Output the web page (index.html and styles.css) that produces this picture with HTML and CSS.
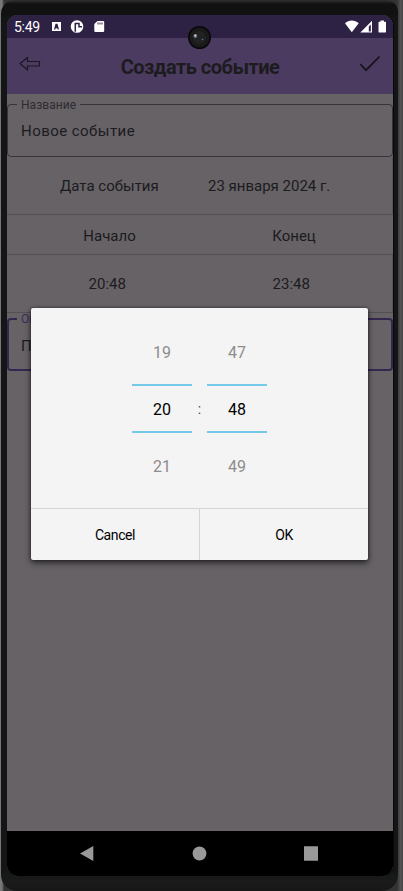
FILE: index.html
```html
<!DOCTYPE html>
<html lang="ru">
<head>
<meta charset="utf-8">
<title>Создать событие</title>
<link rel="stylesheet" href="styles.css">
</head>
<body>
<div class="device">
  <div class="body">
    <div class="screen">
      <div class="statusbar">
        <span class="clock">5:49</span>
        <svg class="notifications" width="54" height="14" viewBox="0 0 54 14">
          <path fill="#fff" fill-rule="evenodd" d="M1 2h9v9H1zM3 9.500h1.300l.4-1.200h1.600l.4 1.200H8L6.500 3.800h-2z"/>
          <circle cx="26" cy="6.500" r="6.300" fill="#fff"/>
          <path fill="none" stroke="#2d2144" stroke-width="1.500" d="M24.300 11.800V3.500H28V6.800H31"/>
          <path fill="#fff" fill-rule="evenodd" d="M46.500 1h6l.7.700v9.600l-.7.700h-8.500l-.7-.7V4zM46.500 2.500v2h1v-2zm2 0v2h1v-2zm2 0v2h1v-2z"/>
        </svg>
        <svg class="signals" width="42" height="14" viewBox="0 0 42 14">
          <path fill="#fff" d="M0 3.300C4-.3 9.500-.3 13.700 3.300L6.800 12.300z"/>
          <path fill="#fff" fill-rule="evenodd" d="M15.300 12.500L27 .8v11.700zM23.800 6.500v5h2V4.500z"/>
          <path fill="#fff" d="M35.500.5h3.500v1.300h1.500l.5.500v9.700l-.5.500h-6.500l-.5-.5V2.300l.5-.5h1.500z"/>
        </svg>
      </div>
      <div class="appbar">
        <svg class="back" width="22" height="16" viewBox="0 0 22 16">
          <path d="M1 7.500L8.500 1.500v4H20.500v4.500H8.500v4z" fill="none" stroke="#1b1624" stroke-width="1.200"/>
        </svg>
        <h1>Создать событие</h1>
        <svg class="done" width="22" height="18" viewBox="0 0 22 18">
          <path d="M1.200 9L7 15.200L20.500 1.500" fill="none" stroke="#15121a" stroke-width="1.700"/>
        </svg>
      </div>
      <fieldset class="field name"><legend>Название</legend><span>Новое событие</span></fieldset>
      <div class="date"><span>Дата события</span><span>23 января 2024 г.</span></div>
      <div class="row heads"><span>Начало</span><span>Конец</span></div>
      <div class="row times"><span>20:48</span><span>23:48</span></div>
      <fieldset class="field about"><legend>Описание</legend><span>П</span></fieldset>
      <div class="navbar">
        <svg width="386" height="45" viewBox="0 0 386 45" fill="#999">
          <path d="M73 22.500L86.300 15v15z"/>
          <circle cx="192.500" cy="22.500" r="6.900"/>
          <path d="M297 15.200h14v14.600h-14z"/>
        </svg>
      </div>
    </div>
  </div>
  <svg class="camera" width="24" height="24" viewBox="0 0 24 24">
    <circle cx="11.500" cy="12.500" r="11.500" fill="#080808"/>
    <circle cx="11.500" cy="12.500" r="10" fill="#1a1a1a"/>
    <circle cx="11.500" cy="12.500" r="6.500" fill="#222223"/>
    <circle cx="7.300" cy="11" r="1.900" fill="#6f7580"/>
    <circle cx="7.300" cy="10.500" r=".9" fill="#d5d5df"/>
    <circle cx="14.500" cy="14.500" r=".8" fill="#3d80bb"/>
  </svg>
  <div class="dialog">
    <div class="pickers">
      <div class="wheel"><span>19</span><b>20</b><span class="next">21</span></div>
      <i>:</i>
      <div class="wheel"><span>47</span><b>48</b><span class="next">49</span></div>
    </div>
    <div class="actions"><button>Cancel</button><button>OK</button></div>
  </div>
</div>
</body>
</html>
```
FILE: styles.css
```css
* { box-sizing: border-box; }
body { margin: 0; font-family: Roboto, sans-serif; background: #414241; }
.device {
  position: relative;
  width: 403px;
  height: 891px;
  overflow: hidden;
  padding-left: 1px;
  background: linear-gradient(90deg, #777 0, #777 2px, #333 4px, #333 397px, #3c3c3c 398px, #565656 401px, #414141 403px);
}
.body {
  width: 397px;
  height: 891px;
  padding: 15px 5px 15px 6px;
  border-radius: 14px 12px 16px 16px;
  background: linear-gradient(#303030 0, #111 4px, #111 14px, #141616 20px, #141616 870px, #1a1a1a 882px, #171717 891px);
}
.screen {
  display: flex;
  flex-direction: column;
  width: 386px;
  height: 861px;
  border-radius: 11px;
  overflow: hidden;
  background: #666266;
  color: #1c1b1e;
  box-shadow: 1px 0 0 #080808;
}
.statusbar {
  display: flex;
  height: 23px;
  flex: none;
  padding: 4px 6px 0 7px;
  background: #2d2144;
  color: #fff;
}
.clock { width: 37px; font-size: 14px; line-height: 16px; letter-spacing: -.3px; }
.notifications { margin-top: 1px; }
.signals { margin: 1px 0 0 auto; }
.appbar {
  display: flex;
  height: 56px;
  flex: none;
  padding: 0 12px;
  background: #4c3b61;
}
.back { margin-top: 18px; }
.done { margin-top: 17px; }
h1 { flex: 1; margin: 1px 0 0; text-align: center; font-size: 20px; line-height: 56px; font-weight: 700; letter-spacing: -.5px; }
.field {
  height: 59px;
  flex: none;
  min-width: 0;
  margin: 4px 0 0;
  padding: 0 0 0 13px;
  border: 1.500px solid #363438;
  border-radius: 4px;
  font-size: 15px;
}
.field legend { height: 13px; padding: 1px 4px 0; margin-left: -4px; font-size: 12px; line-height: 13px; letter-spacing: .05px; color: #2e2c31; }
.field span { display: block; margin-top: 11px; line-height: 18px; letter-spacing: .45px; }
.date {
  display: flex;
  height: 58px;
  flex: none;
  padding-left: 53px;
  border-right: 1px solid #575458;
  border-bottom: 1px solid #525052;
  font-size: 15px;
  line-height: 58px;
}
.date span:first-child { width: 148px; }
.row { display: flex; flex: none; font-size: 15px; border-bottom: 1px solid #525052; }
.row span { flex: 0 0 50%; text-align: center; }
.heads span:first-child { padding-left: 12px; }
.heads span:last-child { padding-right: 5px; }
.heads { height: 40px; line-height: 42px; }
.times { height: 58px; line-height: 59px; border-right: 1px solid #575458; }
.times span:first-child { padding-left: 8px; }
.times span:last-child { padding-right: 9px; }
.about { height: 58px; margin-top: 0; padding-left: 12px; border: 2px solid #352850; }
.about legend { height: 12px; padding-top: 0; color: #3b2d59; }
.about span { margin-top: 12px; }
.navbar { height: 45px; margin-top: auto; background: #000; }
.navbar svg { display: block; }
.camera { position: absolute; left: 188px; top: 25px; }
.dialog {
  position: absolute;
  left: 31px;
  top: 308px;
  width: 337px;
  height: 252px;
  border-radius: 2px;
  background: #f4f4f4;
  box-shadow: 0 3px 6px rgba(0, 0, 0, .6), 0 0 3px rgba(0, 0, 0, .5);
  color: #000;
}
.pickers { display: flex; justify-content: center; height: 200px; padding-top: 20px; font-size: 16px; }
.pickers i { width: 15px; padding-top: 69px; text-align: center; font-style: normal; font-size: 14px; line-height: 24px; color: #444; }
.wheel { width: 60px; text-align: center; }
.wheel span { display: block; line-height: 50px; height: 56px; color: #8c8c8c; }
.wheel b { display: block; height: 49px; border: solid #76cae9; border-width: 2px 0; font-weight: 400; line-height: 47px; }
.wheel .next { padding-top: 9px; height: 56px; }
.actions { display: flex; height: 52px; border-top: 1px solid #d5d5d5; }
.actions button { flex: 1; border: 0; padding: 1px 0 0; background: none; font: 14px Roboto, sans-serif; letter-spacing: -.4px; color: #000; }
.actions button + button { border-left: 1px solid #d5d5d5; }
```
